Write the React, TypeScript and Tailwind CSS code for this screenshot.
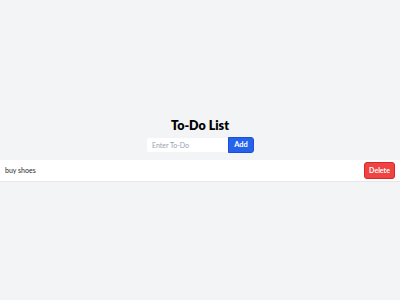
export default function App() {
  return (
    <div
      className="flex min-h-screen flex-col items-center justify-center bg-[#f3f4f6]"
      style={{ fontFamily: 'Lato, "Noto Sans", sans-serif' }}
    >
      <h1 className="mb-[3px] text-[12.5px] font-extrabold leading-[16px] text-black">To-Do List</h1>
      <div className="flex">
        <input
          placeholder="Enter To-Do"
          className="h-[16px] w-[82px] rounded-l-[3px] border border-r-0 border-gray-100 bg-white px-[5px] text-[7px] text-gray-700 outline-none placeholder:text-gray-400"
        />
        <button className="h-[16px] w-[26px] rounded-r-[3px] border border-[#1d4ed8] bg-[#2563eb] text-[7.5px] font-bold text-white">
          Add
        </button>
      </div>
      <ul className="mt-[7px] w-full">
        <li className="flex h-[22px] items-center justify-between border-b border-gray-200 bg-white px-[5px]">
          <span className="text-[7px] text-[#1f1f1f]">buy shoes</span>
          <button className="h-[17px] w-[31px] rounded-[3px] border border-[#dc2626] bg-[#ef4444] text-[7px] font-bold text-white">
            Delete
          </button>
        </li>
      </ul>
    </div>
  );
}
